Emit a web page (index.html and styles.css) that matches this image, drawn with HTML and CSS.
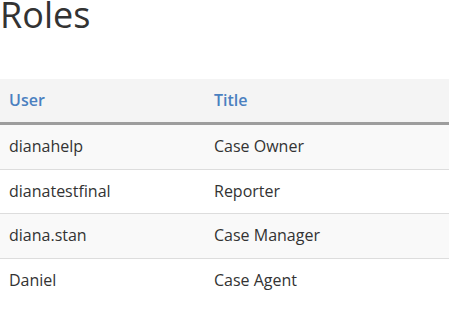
FILE: index.html
```html
<!DOCTYPE html>
<html>
<head>
<meta charset="utf-8">
<link rel="stylesheet" href="styles.css">
</head>
<body>
<h1 class="title">Roles</h1>
<table class="roles">
  <thead>
    <tr><th class="col-user">User</th><th>Title</th></tr>
  </thead>
  <tbody>
    <tr><td>dianahelp</td><td>Case Owner</td></tr>
    <tr><td>dianatestfinal</td><td>Reporter</td></tr>
    <tr><td>diana.stan</td><td>Case Manager</td></tr>
    <tr><td>Daniel</td><td>Case Agent</td></tr>
  </tbody>
</table>
</body>
</html>
```

FILE: styles.css
```css
html, body {
  margin: 0;
  padding: 0;
  background: #fff;
}
body {
  font-family: "Open Sans", "Liberation Sans", sans-serif;
  color: #333;
}
.title {
  margin: 0;
  padding: 0;
  font-size: 36px;
  font-weight: 400;
  line-height: 30px;
  color: #333;
  height: 79px;
}
.roles {
  width: 449px;
  border-collapse: collapse;
  font-size: 16px;
}
.roles th {
  text-align: left;
  font-weight: 600;
  color: #4a80c0;
  background: #f4f4f4;
  padding: 10px 9px;
  line-height: 23px;
  border-bottom: 3px solid #9d9d9d;
}
.roles .col-user {
  width: 187px;
}
.roles td {
  padding: 10px 9px;
  line-height: 23.5px;
  border-bottom: 1px solid #dddddd;
}
.roles tbody tr:nth-child(odd) td {
  background: #f9f9f9;
}
.roles tbody tr:last-child td {
  border-bottom: none;
}
```
